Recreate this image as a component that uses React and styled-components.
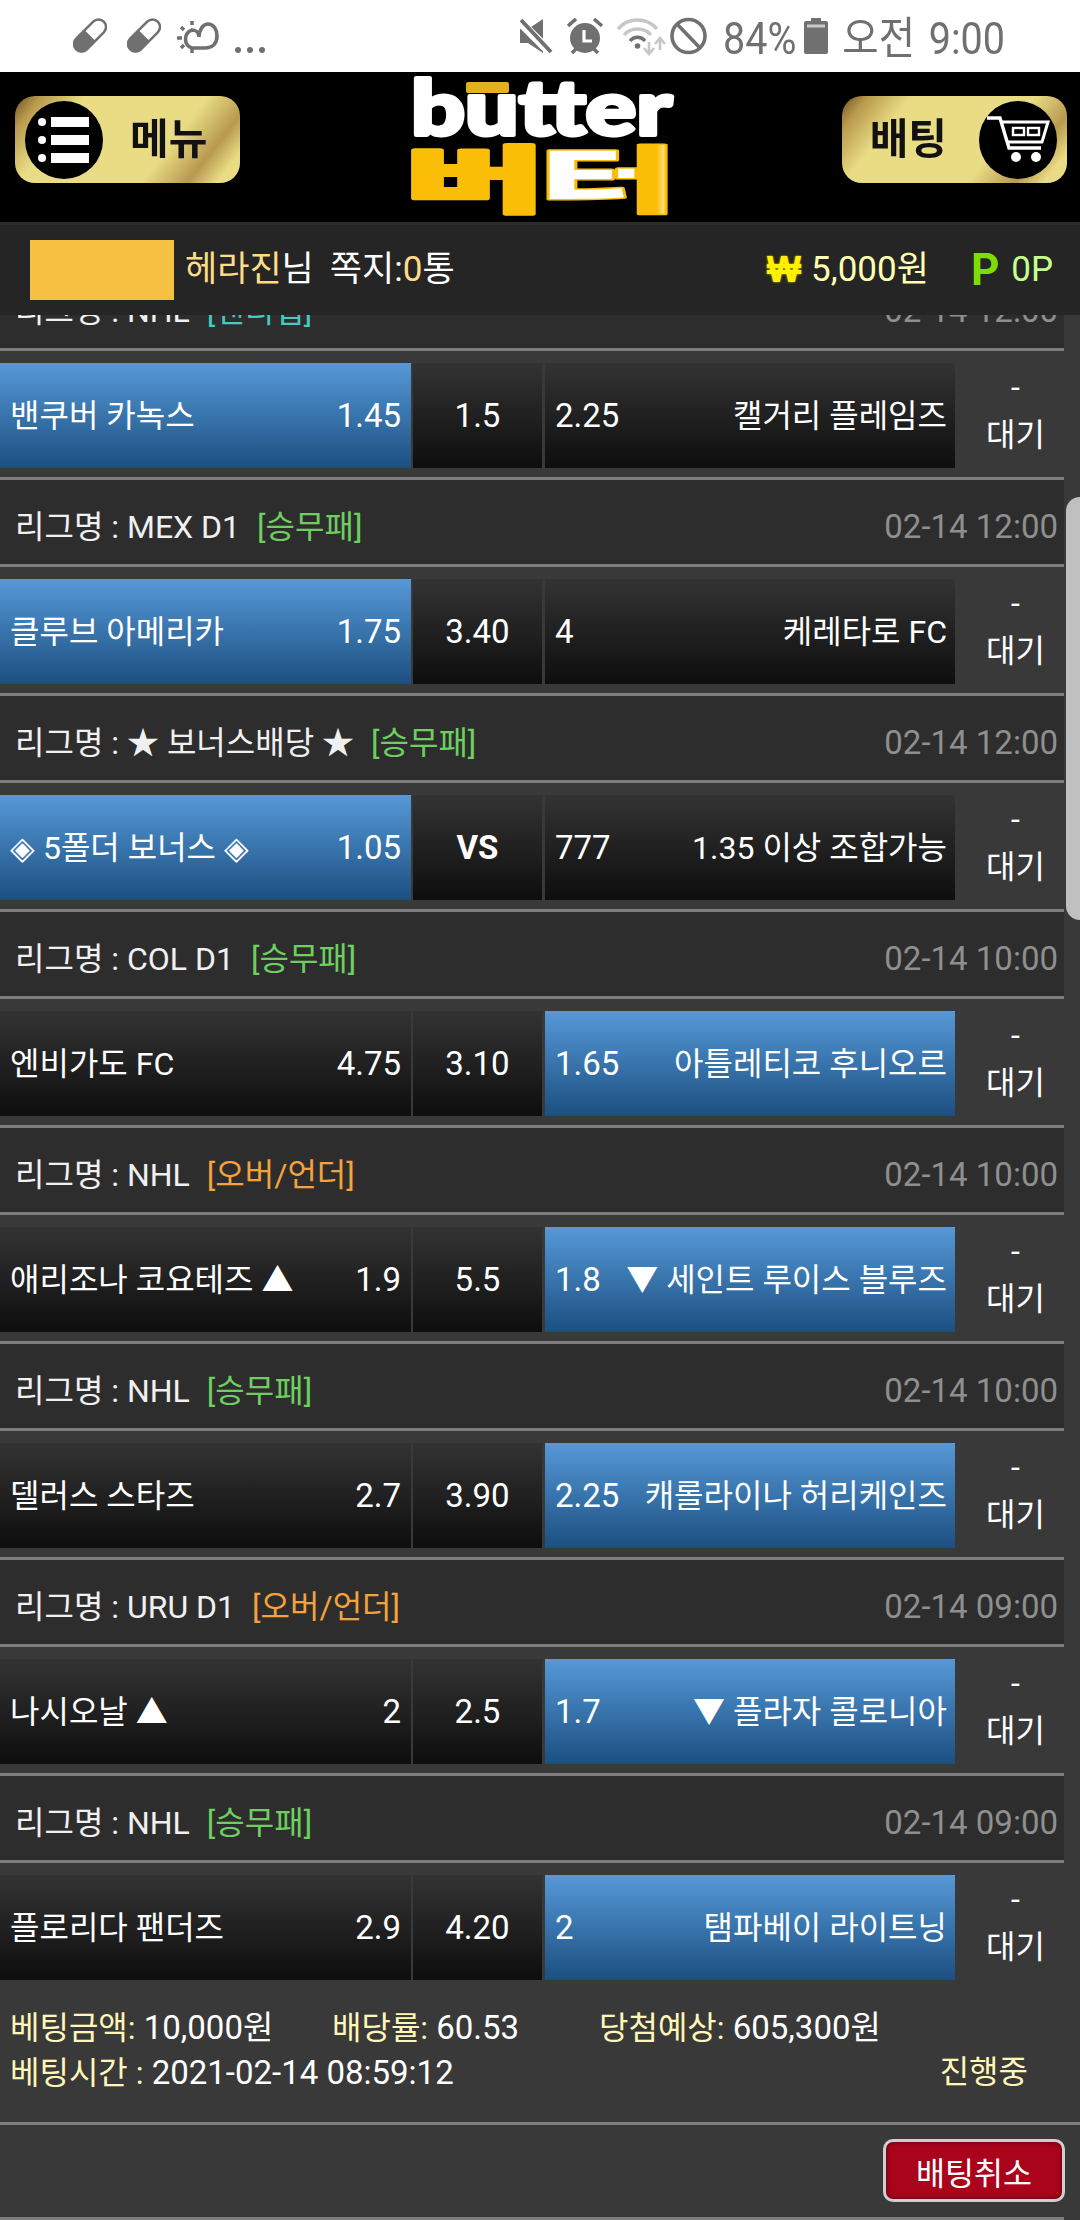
import React from 'react'
import styled, { createGlobalStyle } from 'styled-components'

const FONT = `Roboto, "Noto Sans CJK KR", "Noto Sans", sans-serif`

const Style = createGlobalStyle`
  html, body {
    margin: 0;
    padding: 0;
    background: #393939;
  }
  body {
    font-family: ${FONT};
  }
`

const Page = styled.div`
  width: 1080px;
  height: 2220px;
  overflow: hidden;
  display: flex;
  flex-direction: column;
  position: relative;
  font-size: 33px;
  line-height: 44px;
  color: #fff;
`

/* status bar */
const StatusBar = styled.div`
  height: 72px;
  flex: none;
  background: #fff;
  display: flex;
  align-items: flex-start;
  padding: 0 75px 0 73px;
  box-sizing: border-box;
  color: #707070;
`

const StatusGroup = styled.div`
  display: flex;
  align-items: flex-start;
  margin-left: ${(p) => (p.$end ? 'auto' : '0')};
`

const StatusSlot = styled.div`
  margin-left: ${(p) => p.$left || 0}px;
  margin-top: ${(p) => p.$top || 18}px;
  display: flex;

  svg {
    display: block;
  }
`

const StatusText = styled.div`
  margin-left: ${(p) => p.$left || 0}px;
  margin-top: 14px;
  font-size: 39.5px;
  line-height: 44px;
  white-space: nowrap;
  word-spacing: 4px;
  transform: scaleY(1.13);
  transform-origin: center top;
`

const Pill = () => (
  <svg width="34" height="35" viewBox="0 0 34 35">
    <g transform="rotate(45 17 17.5)">
      <rect x="9.5" y="-2" width="15" height="39" rx="7.5" fill="none" stroke="#707070" strokeWidth="2.5" />
      <path d="M8.5 17.5h17v12a8.5 8.5 0 0 1-17 0z" fill="#707070" />
    </g>
  </svg>
)

const Weather = () => (
  <svg width="42" height="32" viewBox="0 0 42 32" fill="none" stroke="#707070">
    <path d="M22 16C22 9 26 3 31 3C37 3 40 9 40 15C40 23 35 27 28 27H15A9.5 9.5 0 0 1 15 9C18 9 22 11 22 16" strokeWidth="3.6" />
    <path d="M15 0v4M0 17h5M15 28v4M4 6l3 3M4 27l3-3" strokeWidth="3.4" />
  </svg>
)

const Dots = () => (
  <svg width="30" height="8" viewBox="0 0 30 8" fill="#707070">
    <circle cx="3" cy="4" r="3" />
    <circle cx="15" cy="4" r="3" />
    <circle cx="27" cy="4" r="3" />
  </svg>
)

const Mute = () => (
  <svg width="33" height="36" viewBox="0 0 33 36">
    <path d="M0 11h8L23 1v34L8 25H0z" fill="#707070" />
    <path d="M-2 2L31 35" stroke="#fff" strokeWidth="9" />
    <path d="M1 2L31 34" stroke="#707070" strokeWidth="4" />
  </svg>
)

const Alarm = () => (
  <svg width="36" height="36" viewBox="0 0 36 36">
    <circle cx="18" cy="20" r="15" fill="#707070" />
    <path d="M1 8L9 1M27 1L35 8M5 35L9 31M31 35L27 31" stroke="#707070" strokeWidth="3.5" />
    <path d="M17 12v11h8" stroke="#fff" strokeWidth="3.2" fill="none" />
  </svg>
)

const Wifi = () => (
  <svg width="49" height="38" viewBox="0 0 49 38" fill="none">
    <path d="M1 11C11 -1 30 -1 40 11" stroke="#c6c6c6" strokeWidth="3.4" />
    <path d="M7 17C14 9 27 9 34 17" stroke="#c6c6c6" strokeWidth="3.4" />
    <path d="M13 23C17 18 24 18 28 23" stroke="#707070" strokeWidth="3.4" />
    <circle cx="20.5" cy="28" r="2.8" fill="#707070" />
    <path d="M32 24v11M27 30l5 6 5-6" stroke="#c6c6c6" strokeWidth="2.6" />
    <path d="M43 20v12M38 26l5-6 5 6" stroke="#c6c6c6" strokeWidth="2.6" />
  </svg>
)

const Ban = () => (
  <svg width="37" height="38" viewBox="0 0 37 38" fill="none" stroke="#707070" strokeWidth="3.6">
    <circle cx="18.5" cy="19" r="16.5" />
    <path d="M7 7L30 31" />
  </svg>
)

const Battery = () => (
  <svg width="24" height="36" viewBox="0 0 24 36">
    <path d="M7 0h10v3h5a2 2 0 0 1 2 2v29a2 2 0 0 1-2 2H2a2 2 0 0 1-2-2V5a2 2 0 0 1 2-2h5z" fill="#707070" />
    <rect x="3" y="6.5" width="18" height="3" fill="#c9c9c9" />
  </svg>
)

/* site header */
const Header = styled.div`
  height: 150px;
  flex: none;
  background: #000;
  display: flex;
  align-items: flex-start;
  justify-content: space-between;
  padding: 0 13px 0 15px;
  box-sizing: border-box;
`

const GoldButton = styled.div`
  width: 225px;
  height: 87px;
  margin-top: 24px;
  border-radius: 20px;
  background: linear-gradient(128deg, #70501f 0%, #b99a4e 9%, #e9dc84 24%, #e9dc84 66%, #b8994f 82%, #e9dc84 92%);
  display: flex;
  align-items: center;
  padding: 0 10px;
  box-sizing: border-box;
  justify-content: ${(p) => (p.$right ? 'flex-end' : 'flex-start')};
  filter: blur(0.5px);
`

const GoldLabel = styled.span`
  font-size: 42px;
  font-weight: 700;
  color: #111;
  margin: ${(p) => (p.$right ? '0 32px 0 0' : '0 0 0 27px')};
  white-space: nowrap;
`

const BlackCircle = styled.div`
  width: 78px;
  height: 78px;
  border-radius: 50%;
  background: #000;
  flex: none;
  display: flex;
  align-items: center;
  justify-content: center;
`

const MenuIcon = () => (
  <svg width="54" height="50" viewBox="0 0 54 50" fill="#fff">
    <circle cx="5" cy="7" r="4" />
    <circle cx="5" cy="25" r="4" />
    <circle cx="5" cy="43" r="4" />
    <rect x="14" y="2" width="38" height="10" />
    <rect x="14" y="20" width="38" height="10" />
    <rect x="14" y="38" width="38" height="10" />
  </svg>
)

const CartIcon = () => (
  <svg width="64" height="50" viewBox="0 0 64 50" fill="none" stroke="#fff">
    <path d="M1 3H14L23 33H55" strokeWidth="3.4" />
    <path d="M15 7H62L56 27H21" strokeWidth="3" />
    <rect x="27" y="13" width="11" height="7" strokeWidth="2.4" />
    <rect x="42" y="13" width="11" height="7" strokeWidth="2.4" />
    <circle cx="30" cy="42" r="5" fill="#fff" stroke="none" />
    <circle cx="50" cy="42" r="5" fill="#fff" stroke="none" />
  </svg>
)

const LogoWrap = styled.div`
  width: 261px;
  margin-top: 9px;

  svg {
    display: block;
    overflow: visible;
  }
`

const Logo = () => (
  <LogoWrap>
    <svg width="261" height="133" viewBox="0 0 261 133">
      <defs>
        <linearGradient id="terFill" gradientUnits="userSpaceOnUse" x1="133" y1="0" x2="261" y2="0">
          <stop offset="0.7" stopColor="#fff" />
          <stop offset="0.71" stopColor="#fbbe07" />
          <stop offset="0.88" stopColor="#fbbe07" />
          <stop offset="1" stopColor="#fff" />
        </linearGradient>
      </defs>
      <text
        x="0"
        y="54"
        fontFamily="Lato, 'Open Sans', sans-serif"
        fontWeight="900"
        fontSize="76"
        fill="#fff"
        stroke="#fff"
        strokeWidth="4"
        strokeLinejoin="round"
        textLength="261"
        lengthAdjust="spacingAndGlyphs"
      >
        butter
      </text>
      <rect x="55" y="1" width="43" height="11" rx="2" fill="#e4b020" />
      <text
        x="-6"
        y="125"
        fontFamily="'Noto Sans CJK KR', sans-serif"
        fontWeight="900"
        fontSize="72"
        fill="#fbbe07"
        stroke="#fbbe07"
        strokeWidth="4"
        strokeLinejoin="round"
        textLength="140"
        lengthAdjust="spacingAndGlyphs"
      >
        버
      </text>
      <text
        x="127"
        y="125"
        fontFamily="'Noto Sans CJK KR', sans-serif"
        fontWeight="900"
        fontSize="72"
        fill="url(#terFill)"
        stroke="#fbbe07"
        strokeWidth="3"
        strokeLinejoin="round"
        paintOrder="stroke"
        textLength="140"
        lengthAdjust="spacingAndGlyphs"
      >
        터
      </text>
    </svg>
  </LogoWrap>
)

/* user bar */
const UserBar = styled.div`
  height: 93px;
  flex: none;
  background: #252525;
  border-top: 3px solid #2c2c2c;
  display: flex;
  align-items: center;
  padding: 0 27px 0 30px;
  box-sizing: border-box;
  white-space: nowrap;
  font-size: 35px;
`

const Masked = styled.div`
  width: 144px;
  height: 60px;
  background: #f6c143;
  margin-right: 11px;
`

const Gold = styled.span`
  color: #ffdc85;
`

const Note = styled.span`
  margin-left: 16px;
`

const Wallet = styled.div`
  margin-left: auto;
  display: flex;
  align-items: center;
`

const WonMark = styled.span`
  font-family: "Liberation Sans", sans-serif;
  font-size: 36px;
  font-weight: 700;
  color: #fff000;
  margin-right: 10px;
  text-shadow: 0 0 2px #fff000;
`

const Money = styled.span`
  color: #ffffb0;
`

const PointMark = styled.span`
  font-size: 44px;
  line-height: 44px;
  font-weight: 700;
  color: #7fdc00;
  margin: 0 12px 0 42px;
`

const Points = styled.span`
  color: #c6ff8a;
`

/* board */
const Board = styled.div`
  flex: 1;
  min-height: 0;
  overflow: hidden;
  background: #393939;
`

const List = styled.div`
  width: 1064px;
  margin-top: -51px;
`

const Rule = styled.div`
  height: 3px;
  background: #7d7d7d;
`

const LeagueRow = styled.div`
  height: 84px;
  box-sizing: border-box;
  padding: 10px 6px 0 15px;
  background: #2d2d2d;
  display: flex;
  align-items: center;
  justify-content: space-between;
  white-space: nowrap;
`

const LeagueName = styled.span`
  color: #f0f0f0;
  font-size: 32px;
`

const BetType = styled.span`
  margin-left: 17px;
  font-size: 32px;
  color: ${(p) => p.$color};
`

const Kickoff = styled.span`
  color: #8f8f8f;
`

const MatchRow = styled.div`
  height: 126px;
  box-sizing: border-box;
  padding-top: 12px;
  display: flex;
  align-items: flex-start;
`

const Odd = styled.div`
  height: 105px;
  flex: none;
  width: ${(p) => p.$width}px;
  margin-left: ${(p) => p.$gap || 0}px;
  box-sizing: border-box;
  padding: 0 10px;
  display: flex;
  align-items: center;
  justify-content: ${(p) => (p.$center ? 'center' : 'space-between')};
  white-space: nowrap;
  font-weight: ${(p) => (p.$bold ? 700 : 400)};
  background: ${(p) =>
    p.$picked
      ? 'linear-gradient(180deg, #5599d8 0%, #1b4f80 100%)'
      : 'linear-gradient(180deg, #333 0%, #0e0e0e 100%)'};
`

const Team = styled.span`
  font-size: 32px;
  margin-right: ${(p) => (p.$away ? -2 : 0)}px;
`

const Result = styled.div`
  flex: 1;
  padding-left: 12px;
  text-align: center;
  font-size: 32px;
  line-height: 48px;
`

const Summary = styled.div`
  height: 133px;
  box-sizing: border-box;
  padding: 16px 0 0 10px;
`

const SummaryLine = styled.div`
  display: flex;
  height: 45px;
  line-height: 45px;
  white-space: nowrap;
  justify-content: ${(p) => (p.$spread ? 'space-between' : 'flex-start')};
  padding-right: ${(p) => (p.$spread ? 52 : 0)}px;
`

const Stat = styled.div`
  width: ${(p) => p.$width}px;
`

const Label = styled.span`
  color: #fff6b8;
  font-size: 32px;
`

const Actions = styled.div`
  height: 92px;
  box-sizing: border-box;
  padding: 14px 15px 0 0;
  display: flex;
  justify-content: flex-end;
  align-items: flex-start;
`

const CancelButton = styled.button`
  width: 182px;
  height: 63px;
  box-sizing: border-box;
  padding: 0;
  border: 3px solid #cfcfcf;
  border-radius: 10px;
  background: #aa041c;
  box-shadow: inset 0 0 5px #4d0410;
  color: #fff;
  font-family: ${FONT};
  font-size: 31.5px;
`

const BottomRule = styled(Rule)`
  width: 1064px;
`

const ScrollThumb = styled.div`
  position: absolute;
  right: 0;
  top: 497px;
  width: 14px;
  height: 423px;
  background: #c0c0c0;
  border-radius: 14px 0 0 14px;
`

const GREEN = '#6ecf60'
const ORANGE = '#f4a23c'
const TEAL = '#45c9c0'

const groups = [
  { league: 'NHL', type: '핸디캡', color: TEAL, time: '02-14 12:00', home: '밴쿠버 카녹스', homeOdd: '1.45', mid: '1.5', awayOdd: '2.25', away: '캘거리 플레임즈', pick: 'home' },
  { league: 'MEX D1', type: '승무패', color: GREEN, time: '02-14 12:00', home: '클루브 아메리카', homeOdd: '1.75', mid: '3.40', awayOdd: '4', away: '케레타로 FC', pick: 'home' },
  { league: '★ 보너스배당 ★', type: '승무패', color: GREEN, time: '02-14 12:00', home: '◈ 5폴더 보너스 ◈', homeOdd: '1.05', mid: 'VS', awayOdd: '777', away: '1.35 이상 조합가능', pick: 'home' },
  { league: 'COL D1', type: '승무패', color: GREEN, time: '02-14 10:00', home: '엔비가도 FC', homeOdd: '4.75', mid: '3.10', awayOdd: '1.65', away: '아틀레티코 후니오르', pick: 'away' },
  { league: 'NHL', type: '오버/언더', color: ORANGE, time: '02-14 10:00', home: '애리조나 코요테즈 ▲', homeOdd: '1.9', mid: '5.5', awayOdd: '1.8', away: '▼ 세인트 루이스 블루즈', pick: 'away' },
  { league: 'NHL', type: '승무패', color: GREEN, time: '02-14 10:00', home: '델러스 스타즈', homeOdd: '2.7', mid: '3.90', awayOdd: '2.25', away: '캐롤라이나 허리케인즈', pick: 'away' },
  { league: 'URU D1', type: '오버/언더', color: ORANGE, time: '02-14 09:00', home: '나시오날 ▲', homeOdd: '2', mid: '2.5', awayOdd: '1.7', away: '▼ 플라자 콜로니아', pick: 'away' },
  { league: 'NHL', type: '승무패', color: GREEN, time: '02-14 09:00', home: '플로리다 팬더즈', homeOdd: '2.9', mid: '4.20', awayOdd: '2', away: '탬파베이 라이트닝', pick: 'away' },
]

const Group = ({ item, last }) => (
  <>
    <LeagueRow>
      <span>
        <LeagueName>리그명 : {item.league}</LeagueName>
        <BetType $color={item.color}>[{item.type}]</BetType>
      </span>
      <Kickoff>{item.time}</Kickoff>
    </LeagueRow>
    <Rule />
    <MatchRow>
      <Odd $width={411} $picked={item.pick === 'home'}>
        <Team>{item.home}</Team>
        <span>{item.homeOdd}</span>
      </Odd>
      <Odd $width={129} $gap={2} $center $bold={item.mid === 'VS'}>
        {item.mid}
      </Odd>
      <Odd $width={410} $gap={3} $picked={item.pick === 'away'}>
        <span>{item.awayOdd}</span>
        <Team $away>{item.away}</Team>
      </Odd>
      <Result>
        -
        <br />
        대기
      </Result>
    </MatchRow>
    {!last && <Rule />}
  </>
)

export default function App() {
  return (
    <Page>
      <Style />
      <StatusBar>
        <StatusGroup>
          <StatusSlot><Pill /></StatusSlot>
          <StatusSlot $left={20}><Pill /></StatusSlot>
          <StatusSlot $left={16} $top={21}><Weather /></StatusSlot>
          <StatusSlot $left={16} $top={46}><Dots /></StatusSlot>
        </StatusGroup>
        <StatusGroup $end>
          <StatusSlot><Mute /></StatusSlot>
          <StatusSlot $left={14}><Alarm /></StatusSlot>
          <StatusSlot $left={14}><Wifi /></StatusSlot>
          <StatusSlot $left={4} $top={17}><Ban /></StatusSlot>
          <StatusText $left={16}>84%</StatusText>
          <StatusSlot $left={8}><Battery /></StatusSlot>
          <StatusText $left={14}>오전 9:00</StatusText>
        </StatusGroup>
      </StatusBar>

      <Header>
        <GoldButton>
          <BlackCircle><MenuIcon /></BlackCircle>
          <GoldLabel>메뉴</GoldLabel>
        </GoldButton>
        <Logo />
        <GoldButton $right>
          <GoldLabel $right>배팅</GoldLabel>
          <BlackCircle><CartIcon /></BlackCircle>
        </GoldButton>
      </Header>

      <UserBar>
        <Masked />
        <Gold>헤라진</Gold>님
        <Note>쪽지:<Gold>0</Gold>통</Note>
        <Wallet>
          <WonMark>₩</WonMark>
          <Money>5,000원</Money>
          <PointMark>P</PointMark>
          <Points>0P</Points>
        </Wallet>
      </UserBar>

      <Board>
        <List>
          {groups.map((item, i) => (
            <Group key={i} item={item} last={i === groups.length - 1} />
          ))}
        </List>
        <Summary>
          <SummaryLine>
            <Stat $width={322}><Label>베팅금액:</Label> 10,000원</Stat>
            <Stat $width={267}><Label>배당률:</Label> 60.53</Stat>
            <Stat><Label>당첨예상:</Label> 605,300원</Stat>
          </SummaryLine>
          <SummaryLine $spread>
            <span><Label>베팅시간 :</Label> 2021-02-14 08:59:12</span>
            <Label>진행중</Label>
          </SummaryLine>
        </Summary>
        <Rule />
        <Actions>
          <CancelButton>배팅취소</CancelButton>
        </Actions>
        <BottomRule />
      </Board>
      <ScrollThumb />
    </Page>
  )
}
